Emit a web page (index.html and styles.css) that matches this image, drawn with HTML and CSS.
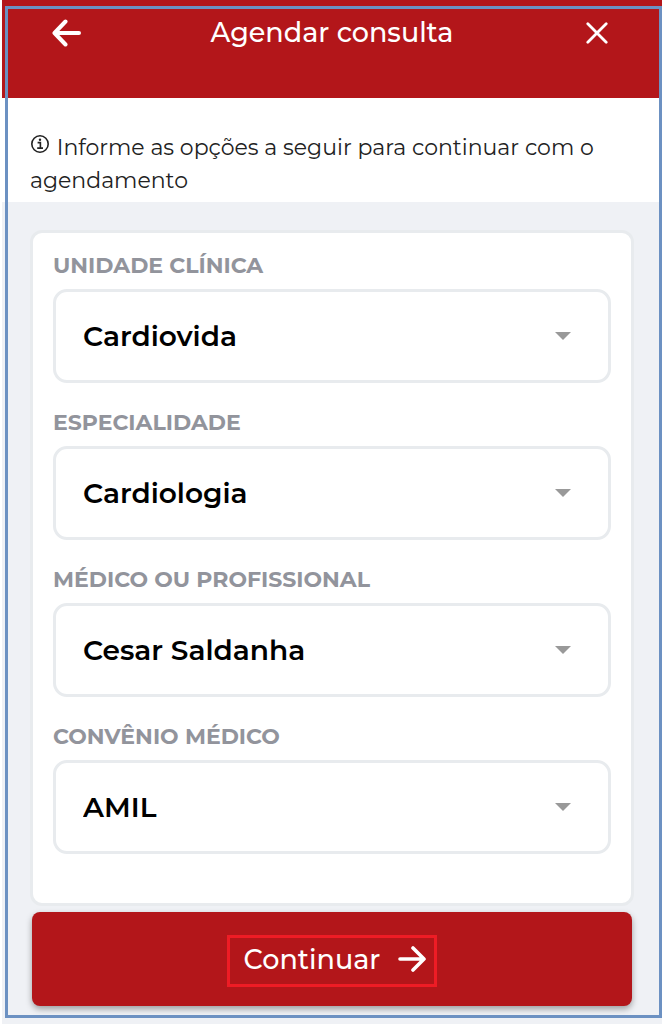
FILE: index.html
```
<!DOCTYPE html>
<html lang="pt-BR">
<head>
    <meta charset="UTF-8">
    <meta name="viewport" content="width=device-width, initial-scale=1.0">
    <title>Agendar consulta</title>
    <link rel="stylesheet" href="styles.css">
</head>
<body>
    <div class="screen">
        <header class="topbar">
            <button class="icon-btn" type="button" aria-label="Voltar">
                <svg width="30" height="28" viewBox="0 0 30 28" fill="none" stroke="currentColor" stroke-width="4" stroke-linecap="round" stroke-linejoin="round">
                    <path d="M27 14H3M13.5 2.5L2.5 14L13.5 25.5"/>
                </svg>
            </button>
            <h1>Agendar consulta</h1>
            <button class="icon-btn" type="button" aria-label="Fechar">
                <svg width="22" height="22" viewBox="0 0 22 22" fill="none" stroke="currentColor" stroke-width="2.8" stroke-linecap="round">
                    <path d="M1.8 1.8L20.2 20.2M20.2 1.8L1.8 20.2"/>
                </svg>
            </button>
        </header>

        <p class="intro">
            <svg class="info-icon" width="20" height="20" viewBox="0 0 20 20" fill="none" stroke="currentColor" stroke-width="1.6">
                <circle cx="10" cy="10" r="8.2"/>
                <path d="M7.6 8.6H10.4V14M7.2 14.1H13"/>
                <circle cx="10" cy="5.8" r="1.2" fill="currentColor" stroke="none"/>
            </svg>
            Informe as opções a seguir para continuar com o agendamento
        </p>

        <form class="form">
            <div class="card">
                <div class="field">
                    <label for="unidade">UNIDADE CLÍNICA</label>
                    <div class="select-box">
                        <select id="unidade">
                            <option>Cardiovida</option>
                        </select>
                        <span class="caret"></span>
                    </div>
                </div>
                <div class="field">
                    <label for="especialidade">ESPECIALIDADE</label>
                    <div class="select-box">
                        <select id="especialidade">
                            <option>Cardiologia</option>
                        </select>
                        <span class="caret"></span>
                    </div>
                </div>
                <div class="field">
                    <label for="medico">MÉDICO OU PROFISSIONAL</label>
                    <div class="select-box">
                        <select id="medico">
                            <option>Cesar Saldanha</option>
                        </select>
                        <span class="caret"></span>
                    </div>
                </div>
                <div class="field">
                    <label for="convenio">CONVÊNIO MÉDICO</label>
                    <div class="select-box">
                        <select id="convenio">
                            <option>AMIL</option>
                        </select>
                        <span class="caret"></span>
                    </div>
                </div>
            </div>

            <button class="submit-btn" type="submit">
                <span class="submit-content">
                    Continuar
                    <svg width="28" height="26" viewBox="0 0 28 26" fill="none" stroke="currentColor" stroke-width="3.6" stroke-linecap="round" stroke-linejoin="round">
                        <path d="M2 13H25M15 2L26 13L15 24"/>
                    </svg>
                </span>
            </button>
        </form>
    </div>
</body>
</html>
```
FILE: styles.css
```
* {
    margin: 0;
    padding: 0;
    box-sizing: border-box;
}

body {
    font-family: "Montserrat", "Inter", sans-serif;
    background-color: #fff;
    color: #222;
}

.screen {
    position: relative;
    min-height: 100vh;
    margin: 0 3px 0 2px;
    background-color: #eff1f5;
}

/* blue outline over the whole screen */
.screen::after {
    content: "";
    position: absolute;
    inset: 6px 0 6px 3px;
    border: 3px solid #6c91c2;
    pointer-events: none;
}

.topbar {
    display: flex;
    align-items: center;
    justify-content: space-between;
    padding: 15px 50px 47px;
    background-color: #b3161a;
    color: #fff;
}

.topbar h1 {
    font-size: 27px;
    font-weight: 500;
    line-height: 36px;
}

.icon-btn {
    display: flex;
    justify-content: center;
    width: 30px;
    background: transparent;
    border: none;
    color: inherit;
    cursor: pointer;
}

.intro {
    padding: 33px 28px 5px;
    background-color: #fff;
    font-size: 22px;
    line-height: 33px;
}

.info-icon {
    margin-right: 1px;
    vertical-align: 1px;
}

.form {
    padding: 28px 28px 18px;
}

.card {
    display: flex;
    flex-direction: column;
    gap: 25px;
    padding: 18px 20px 49px;
    background-color: #fff;
    border: 3px solid #e8ebee;
    border-radius: 12px;
}

.field {
    display: flex;
    flex-direction: column;
    gap: 8px;
}

.field label {
    color: #92949c;
    font-size: 22px;
    font-weight: 700;
    line-height: 30px;
}

.select-box {
    display: grid;
    align-items: center;
}

.select-box select,
.caret {
    grid-area: 1 / 1;
}

.select-box select {
    width: 100%;
    height: 94px;
    padding: 0 27px;
    appearance: none;
    background-color: #fff;
    border: 3px solid #e8ebee;
    border-radius: 14px;
    color: #000;
    font-family: inherit;
    font-size: 28px;
    font-weight: 600;
}

.caret {
    justify-self: end;
    margin-right: 40px;
    border: 8px solid transparent;
    border-top-color: #999;
    border-bottom: none;
    pointer-events: none;
}

.submit-btn {
    display: flex;
    align-items: center;
    justify-content: center;
    width: calc(100% - 4px);
    height: 94px;
    margin: 6px auto 0;
    padding-top: 4px;
    background-color: #b3161a;
    border: none;
    border-radius: 8px;
    box-shadow: 0 3px 6px rgba(0, 0, 0, 0.35);
    color: #fff;
    font-family: inherit;
    font-size: 27px;
    font-weight: 500;
    cursor: pointer;
}

.submit-content {
    display: flex;
    align-items: center;
    gap: 18px;
    height: 52px;
    padding: 0 8px 4px 14px;
    border: 3px solid #ee1c25;
}
```
